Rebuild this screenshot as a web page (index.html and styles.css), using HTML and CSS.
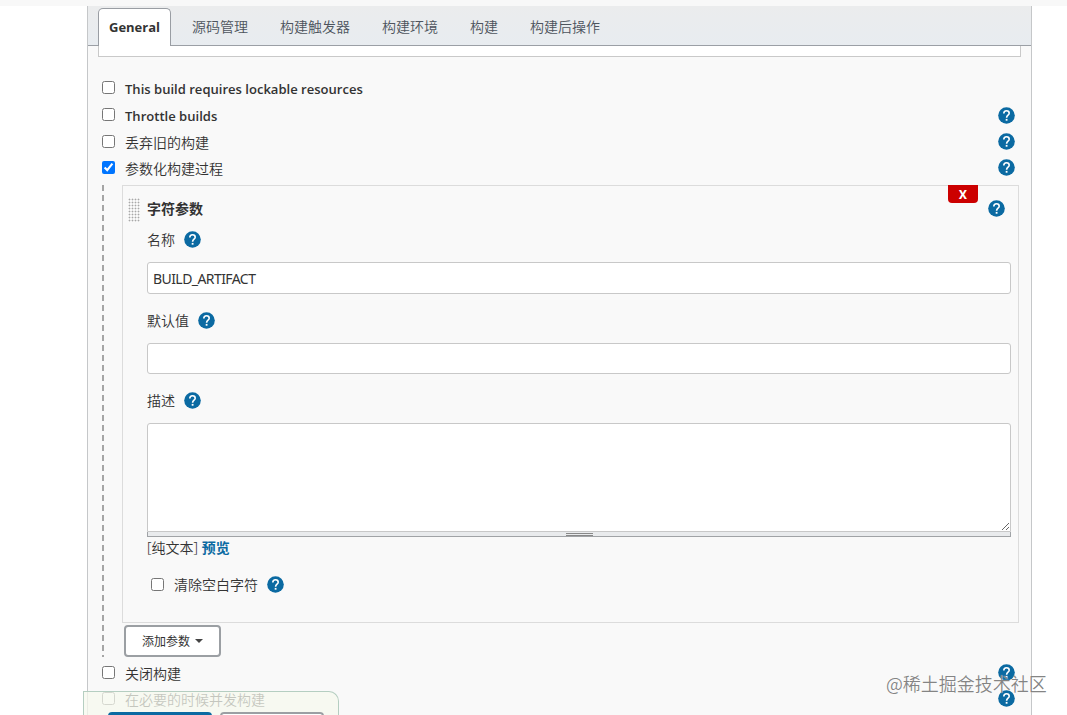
FILE: index.html
```html
<!DOCTYPE html>
<html lang="zh-CN">
<head>
    <meta charset="UTF-8">
    <meta name="viewport" content="width=device-width, initial-scale=1.0">
    <title>General</title>
    <link rel="stylesheet" href="styles.css">
</head>
<body>
    <svg class="sprite" width="0" height="0">
        <symbol id="help" viewBox="0 0 17 17">
            <circle cx="8.5" cy="8.5" r="8.3" fill="#0b6aa2"/>
            <path d="M5.8 6.6C5.8 4.8 7 3.7 8.5 3.7s2.7 1 2.7 2.5c0 2-2.6 2.1-2.6 4.5" fill="none" stroke="#fff" stroke-width="1.6"/>
            <rect x="7.7" y="11.9" width="1.8" height="1.8" fill="#fff"/>
        </symbol>
    </svg>

    <div class="config">
        <nav class="tabs">
            <a class="tab active">General</a>
            <a class="tab">源码管理</a>
            <a class="tab">构建触发器</a>
            <a class="tab">构建环境</a>
            <a class="tab">构建</a>
            <a class="tab">构建后操作</a>
        </nav>
        <div class="description-end"></div>

        <form class="options">
            <div class="option latin">
                <input type="checkbox" id="lockable">
                <label for="lockable">This build requires lockable resources</label>
            </div>
            <div class="option latin">
                <input type="checkbox" id="throttle">
                <label for="throttle">Throttle builds</label>
                <svg class="help"><use href="#help"/></svg>
            </div>
            <div class="option">
                <input type="checkbox" id="discard">
                <label for="discard">丢弃旧的构建</label>
                <svg class="help"><use href="#help"/></svg>
            </div>
            <div class="option">
                <input type="checkbox" id="params" checked>
                <label for="params">参数化构建过程</label>
                <svg class="help"><use href="#help"/></svg>
            </div>

            <div class="group">
                <div class="chunk">
                    <button type="button" class="delete">X</button>
                    <div class="chunk-header">
                        <span class="drag-handle"></span>
                        <b>字符参数</b>
                        <svg class="help"><use href="#help"/></svg>
                    </div>
                    <div class="field-label">名称<svg class="help"><use href="#help"/></svg></div>
                    <input type="text" class="field field-name" value="BUILD_ARTIFACT">
                    <div class="field-label spaced">默认值<svg class="help"><use href="#help"/></svg></div>
                    <input type="text" class="field">
                    <div class="field-label spaced">描述<svg class="help"><use href="#help"/></svg></div>
                    <textarea class="field-area"></textarea>
                    <div class="area-handle"><span></span></div>
                    <div class="preview">[纯文本] <a>预览</a></div>
                    <div class="trim">
                        <input type="checkbox" id="trim">
                        <label for="trim">清除空白字符</label>
                        <svg class="help"><use href="#help"/></svg>
                    </div>
                </div>
                <button type="button" class="add">添加参数<i class="caret"></i></button>
            </div>

            <div class="option">
                <input type="checkbox" id="disable">
                <label for="disable">关闭构建</label>
                <svg class="help"><use href="#help"/></svg>
            </div>
            <div class="option">
                <input type="checkbox" id="concurrent">
                <label for="concurrent">在必要的时候并发构建</label>
                <svg class="help"><use href="#help"/></svg>
            </div>
        </form>
    </div>

    <!-- Sticky save bar -->
    <div class="save-bar">
        <button type="button" class="save"></button>
        <button type="button" class="apply"></button>
    </div>
    <div class="watermark">@稀土掘金技术社区</div>
</body>
</html>
```

FILE: styles.css
```css
* {
    margin: 0;
    padding: 0;
    box-sizing: border-box;
}

body {
    height: 715px;
    padding: 6px 35px 0 87px;
    overflow: hidden;
    background: linear-gradient(#f8f8f8 6px, #fff 6px);
    font-family: "Noto Sans", "Noto Sans CJK SC", sans-serif;
    font-size: 14px;
    font-weight: 350;
    color: #333;
}

.sprite {
    position: absolute;
}

.config {
    height: 709px;
    overflow: hidden;
    border: 1px solid #c5c7c9;
    border-top: none;
    border-bottom: none;
    background: #f9f9f9;
}

.tabs {
    display: flex;
    align-items: flex-end;
    height: 40px;
    padding-left: 10px;
    border-bottom: 1px solid #9b9fa5;
    background: linear-gradient(#ebeced, #e8ecf0);
}

.tab {
    height: 37px;
    padding: 0 16px;
    line-height: 37px;
    color: #4d545d;
}

.tab.active {
    width: 73px;
    height: 38px;
    margin: 0 5px -1px 0;
    padding: 0;
    border: 1px solid #999da3;
    border-bottom: none;
    border-radius: 5px 5px 0 0;
    background: #fff;
    color: #333;
    font-family: "Open Sans", sans-serif;
    font-weight: 700;
    font-size: 13px;
    text-align: center;
}

.description-end {
    height: 11px;
    margin: 0 10px;
    border: 1px solid #c9c9c9;
    border-top: none;
    background: #fff;
}

.options {
    padding: 18px 12px 0 14px;
}

.option {
    display: flex;
    align-items: center;
    height: 26px;
    padding-right: 4px;
}

.option.latin {
    height: 27px;
    font-family: "Open Sans", sans-serif;
    font-weight: 600;
    font-size: 13.05px;
}

.option label {
    margin-left: 10px;
}

.option input {
    margin-top: -2px;
}

.option .help {
    margin-top: -1px;
    margin-left: auto;
}

input[type="checkbox"] {
    width: 13px;
    height: 13px;
}

.help {
    flex: none;
    width: 17px;
    height: 17px;
}

.group {
    height: 472px;
    margin: 4px 0 3px;
    padding-left: 20px;
    background: repeating-linear-gradient(#a5a5a5 0 6px, transparent 6px 10px) 0 0 / 2px 100% no-repeat;
}

.chunk {
    position: relative;
    height: 438px;
    padding: 11px 7px 0 24px;
    border: 1px solid #dcdcdc;
}

.delete {
    position: absolute;
    top: -1px;
    right: 40px;
    width: 30px;
    height: 18px;
    border: none;
    border-radius: 0 0 4px 4px;
    background: #c00;
    color: #fff;
    font: 700 13px/19px Roboto, sans-serif;
}

.chunk-header {
    display: flex;
    align-items: center;
    height: 22px;
    margin-left: -19px;
    padding-right: 6px;
}

.chunk-header .help {
    margin-left: auto;
}

.drag-handle {
    width: 12px;
    height: 24px;
    margin: 3px 7px 0 0;
    background: radial-gradient(#a8a8a8 0.8px, transparent 1.1px) 0 0 / 3px 3px;
}

.field-label {
    display: flex;
    align-items: center;
    gap: 9px;
    height: 40px;
    margin-bottom: 3px;
}

.field-label.spaced {
    margin-top: 6px;
}

.field {
    display: block;
    width: 100%;
    height: 31px;
    padding: 0 5px;
    border: 1px solid #c8c8c8;
    border-radius: 3px;
    background: #fff;
    color: #333;
    font: 14px "Noto Sans", sans-serif;
    letter-spacing: -0.57px;
}

.field-name {
    height: 32px;
}

.field-area {
    display: block;
    width: 100%;
    height: 109px;
    border: 1px solid #c8c8c8;
    border-radius: 3px 3px 0 0;
    background: #fff;
    resize: vertical;
}

.area-handle {
    display: flex;
    justify-content: center;
    height: 5px;
    border: 1px solid #a0a3a6;
    border-top: none;
    background: #e9ebed;
}

.area-handle span {
    width: 27px;
    height: 3px;
    border-top: 1px solid #888;
    border-bottom: 1px solid #888;
    margin-top: 1px;
}

.preview {
    height: 20px;
    margin-top: 1px;
    line-height: 20px;
}

.preview a {
    color: #0b6aa2;
    font-weight: 700;
}

.trim {
    display: flex;
    align-items: center;
    height: 20px;
    margin: 16px 0 0 4px;
}

.trim label {
    margin: 0 9px 0 10px;
}

.trim input {
    margin-top: 1px;
}

.add {
    display: flex;
    align-items: center;
    justify-content: center;
    width: 97px;
    height: 32px;
    margin: 2px 0 0 2px;
    padding-bottom: 1px;
    border: 2px solid #9b9fa3;
    border-radius: 4px;
    background: #fff;
    color: #333;
    font: 400 12px "Noto Sans CJK SC", sans-serif;
}

.caret {
    margin-left: 5px;
    border: 4px solid transparent;
    border-top-color: #444;
    border-bottom: none;
}

.save-bar {
    position: absolute;
    left: 83px;
    top: 691px;
    display: flex;
    gap: 8px;
    width: 256px;
    height: 24px;
    padding: 20px 14px 0 24px;
    overflow: hidden;
    border: 1px solid #b5cec1;
    border-bottom: none;
    border-radius: 0 10px 0 0;
    background: rgba(245, 248, 238, 0.75);
}

.save-bar button {
    flex: none;
    width: 104px;
    height: 32px;
    border: 2px solid #0b6aa2;
    border-radius: 4px;
    background: #0b6aa2;
}

.save-bar .apply {
    border-color: #9b9fa3;
    background: #fff;
}

.watermark {
    position: absolute;
    left: 886px;
    top: 670px;
    color: rgba(110, 110, 110, 0.85);
    font: 400 18px/27px "Noto Sans CJK SC", sans-serif;
    font-weight: 350;
    text-shadow: 0 0 1px #fff;
}
```
